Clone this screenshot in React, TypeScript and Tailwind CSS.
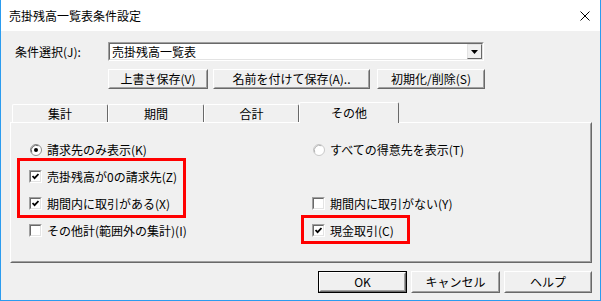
import React, { FC } from 'react';

const RaisedButton: FC<{ label: string; className?: string; isDefault?: boolean }> = ({ label, className = '', isDefault }) => (
  <div className={`${className} ${isDefault ? 'border border-black' : ''}`}>
    <div className="h-full border border-t-white border-l-white border-b-[#696969] border-r-[#696969]">
      <div className="h-full flex items-center justify-center bg-[#f0f0f0] border border-t-[#f0f0f0] border-l-[#f0f0f0] border-b-[#a0a0a0] border-r-[#a0a0a0] text-[12px] leading-none text-black">
        {label}
      </div>
    </div>
  </div>
);

const Radio: FC<{ checked?: boolean }> = ({ checked }) => (
  <svg width="12" height="12" viewBox="0 0 12 12" className="shrink-0">
    <circle cx="6" cy="6" r="5.5" fill="#ffffff" stroke={checked ? '#8c8c8c' : '#c8c8c8'} />
    <path d="M1.8 8.5 A5 5 0 0 1 8.5 1.8" fill="none" stroke={checked ? '#6a6a6a' : '#b4b4b4'} />
    {checked && <circle cx="6" cy="6" r="2" fill="#000" />}
  </svg>
);

const Checkbox: FC<{ checked?: boolean }> = ({ checked }) => (
  <div className="w-[13px] h-[13px] shrink-0 border border-t-[#a0a0a0] border-l-[#a0a0a0] border-b-white border-r-white">
    <div className="w-full h-full bg-white border border-t-[#696969] border-l-[#696969] border-b-[#e3e3e3] border-r-[#e3e3e3] flex items-center justify-center">
      {checked && (
        <svg width="7" height="7" viewBox="0 0 7 7">
          <polyline points="0.5,3 2.6,5.2 6.5,1" fill="none" stroke="#000" strokeWidth="1.8" />
        </svg>
      )}
    </div>
  </div>
);

const Option: FC<{ kind: 'radio' | 'check'; checked?: boolean; label: string }> = ({ kind, checked, label }) => (
  <div className="h-[27px] flex items-center gap-[5px] text-[12px] leading-none text-black whitespace-nowrap">
    {kind === 'radio' ? (
      <div className="w-[13px] flex justify-center"><Radio checked={checked} /></div>
    ) : (
      <Checkbox checked={checked} />
    )}
    <span>{label}</span>
  </div>
);

const Tab: FC<{ label: string; width: string; selected?: boolean }> = ({ label, width, selected }) => (
  <div
    className={`${width} ${selected ? 'h-[21px] -mb-[1px] relative z-10' : 'h-[18px]'} bg-[#f0f0f0] border-t border-l border-r border-t-white border-l-white border-r-[#696969] rounded-t-[2px] flex items-center justify-center text-[12px] leading-none text-black`}
  >
    {label}
  </div>
);

const App: FC = () => {
  return (
    <div className="w-[601px] h-[301px] flex flex-col bg-[#f0f0f0] border-l border-r border-b border-[#2b9cef] font-['Noto_Sans_CJK_JP',sans-serif] overflow-hidden">
      {/* title bar */}
      <div className="h-[31px] shrink-0 bg-white flex items-center justify-between pl-[8px] pr-[10px]">
        <span className="text-[12px] leading-none text-black">売掛残高一覧表条件設定</span>
        <svg width="10" height="10" viewBox="0 0 10 10">
          <path d="M0.5 0.5 L9.5 9.5 M9.5 0.5 L0.5 9.5" stroke="#000" strokeWidth="1" />
        </svg>
      </div>

      <div className="flex flex-col">
        {/* condition select */}
        <div className="mt-[11px] h-[19px] flex items-center">
          <span className="w-[107px] pl-[14px] text-[12px] leading-none text-black">条件選択(J):</span>
          <div className="w-[376px] h-[19px] border border-t-[#a0a0a0] border-l-[#a0a0a0] border-b-white border-r-white">
            <div className="h-full bg-white border border-t-[#696969] border-l-[#696969] border-b-[#e3e3e3] border-r-[#e3e3e3] flex items-center justify-between">
              <span className="pl-[2px] text-[12px] leading-none text-black">売掛残高一覧表</span>
              <div className="w-[15px] h-[15px] border border-t-[#e3e3e3] border-l-[#e3e3e3] border-b-[#696969] border-r-[#696969] bg-[#f0f0f0] flex items-center justify-center">
                <svg width="7" height="4" viewBox="0 0 7 4">
                  <path d="M0 0 H7 L3.5 4 Z" fill="#000" />
                </svg>
              </div>
            </div>
          </div>
        </div>

        {/* save buttons */}
        <div className="mt-[8px] h-[20px] flex pl-[107px]">
          <RaisedButton label="上書き保存(V)" className="w-[100px] h-[20px]" />
          <RaisedButton label="名前を付けて保存(A).." className="ml-[5px] w-[157px] h-[20px]" />
          <RaisedButton label="初期化/削除(S)" className="ml-[7px] w-[108px] h-[20px]" />
        </div>

        {/* tabs */}
        <div className="mt-[13px] h-[20px] flex items-end pl-[11px]">
          <Tab label="集計" width="w-[96px]" />
          <Tab label="期間" width="w-[96px]" />
          <Tab label="合計" width="w-[95px]" />
          <Tab label="その他" width="w-[100px]" selected />
        </div>

        {/* panel */}
        <div className="relative ml-[9px] w-[582px] h-[141px] border border-t-white border-l-white border-b-[#696969] border-r-[#696969]">
          <div className="h-full border border-t-[#f0f0f0] border-l-[#f0f0f0] border-b-[#a0a0a0] border-r-[#a0a0a0] pt-[12px] pl-[17px]">
            <div className="grid grid-cols-[283px_1fr]">
              <Option kind="radio" checked label="請求先のみ表示(K)" />
              <Option kind="radio" label="すべての得意先を表示(T)" />
              <Option kind="check" checked label="売掛残高が0の請求先(Z)" />
              <div />
              <Option kind="check" checked label="期間内に取引がある(X)" />
              <Option kind="check" label="期間内に取引がない(Y)" />
              <Option kind="check" label="その他計(範囲外の集計)(I)" />
              <Option kind="check" checked label="現金取引(C)" />
            </div>
          </div>
          {/* red annotation marks */}
          <div className="absolute left-[6px] top-[35px] w-[169px] h-[60px] border-[3px] border-[#ff0000]" />
          <div className="absolute left-[290px] top-[92px] w-[109px] h-[29px] border-[3px] border-[#ff0000]" />
        </div>

        {/* dialog buttons */}
        <div className="mt-[8px] h-[22px] flex pl-[317px]">
          <RaisedButton label="OK" className="w-[89px] h-[22px]" isDefault />
          <RaisedButton label="キャンセル" className="ml-[4px] w-[89px] h-[22px]" />
          <RaisedButton label="ヘルプ" className="ml-[4px] w-[88px] h-[22px]" />
        </div>
      </div>
    </div>
  );
};

export default App;
